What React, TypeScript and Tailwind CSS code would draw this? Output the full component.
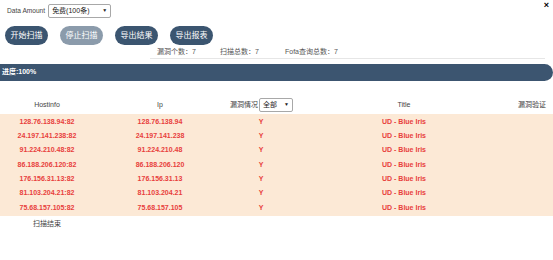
import React from "react";

const rows = [
  ["128.76.138.94:82", "128.76.138.94"],
  ["24.197.141.238:82", "24.197.141.238"],
  ["91.224.210.48:82", "91.224.210.48"],
  ["86.188.206.120:82", "86.188.206.120"],
  ["176.156.31.13:82", "176.156.31.13"],
  ["81.103.204.21:82", "81.103.204.21"],
  ["75.68.157.105:82", "75.68.157.105"],
];

const font = { fontFamily: '"Liberation Sans", "Noto Sans CJK SC", sans-serif' };

function Btn({ label, gray }: { label: string; gray?: boolean }) {
  return (
    <div
      className={`h-[19px] w-[43px] rounded-full flex items-center justify-center text-white text-[8px] ${
        gray ? "bg-[#8b9bab]" : "bg-[#3b5570]"
      }`}
    >
      {label}
    </div>
  );
}

export default function App() {
  return (
    <div className="w-[553px] h-[260px] bg-white relative overflow-hidden text-[#333]" style={font}>
      <div className="absolute right-[4px] top-[1px] text-[9px] font-bold text-black leading-none">×</div>
      <div className="flex items-center pl-[7px] pt-[4px] h-[18px]">
        <span className="text-[6.6px] text-[#444] mr-[3px]">Data Amount</span>
        <div className="w-[63px] h-[14px] border border-[#a8a8a8] rounded-[2px] flex items-center justify-between px-[3px] text-[7px] text-[#222]">
          <span>免费(100条)</span>
          <span className="text-[5px]">▼</span>
        </div>
      </div>
      <div className="flex pl-[5px] pt-[8px] gap-[12px]">
        <Btn label="开始扫描" />
        <Btn label="停止扫描" gray />
        <Btn label="导出结果" />
        <Btn label="导出报表" />
      </div>
      <div className="flex pl-[157px] h-[12px] items-center text-[7px] text-[#555] mt-[1px]">
        <span className="w-[63px]">漏洞个数：7</span>
        <span className="w-[65px]">扫描总数：7</span>
        <span>Fofa查询总数：7</span>
      </div>
      <div className="ml-[150px] mr-[8px] h-px bg-[#e6e6e6]" />
      <div className="mt-[5px] h-[17px] bg-[#3c5570] rounded-r-full rounded-l-[6px] -ml-[2px] flex items-center pl-[4px] text-white font-bold text-[7px]">
        进度:100%
      </div>
      <div className="flex items-center h-[16px] mt-[16px] text-[7px] text-[#444]">
        <div className="w-[94px] text-center">Hostinfo</div>
        <div className="w-[132px] text-center">Ip</div>
        <div className="w-[70px] flex items-center pl-[4px]">
          <span>漏洞情况</span>
          <div className="ml-[1px] w-[34px] h-[14px] border border-[#a8a8a8] rounded-[2px] flex items-center justify-between px-[3px] text-[7px] text-[#222]">
            <span>全部</span>
            <span className="text-[5px]">▼</span>
          </div>
        </div>
        <div className="w-[216px] text-center">Title</div>
        <div className="flex-1 text-center pr-[1px]">漏洞验证</div>
      </div>
      <div className="mt-[1px] bg-[#fce9d6] py-[1px]">
        {rows.map(([h, ip], i) => (
          <div key={i} className="flex items-center h-[14.3px] text-[7px] font-bold text-[#e8403c]">
            <div className="w-[94px] text-center">{h}</div>
            <div className="w-[132px] text-center">{ip}</div>
            <div className="w-[70px] text-center">Y</div>
            <div className="w-[216px] text-center">UD - Blue Iris</div>
            <div className="flex-1" />
          </div>
        ))}
      </div>
      <div className="pl-[33px] pt-[3px] text-[7px] text-[#444]">扫描结束</div>
    </div>
  );
}
